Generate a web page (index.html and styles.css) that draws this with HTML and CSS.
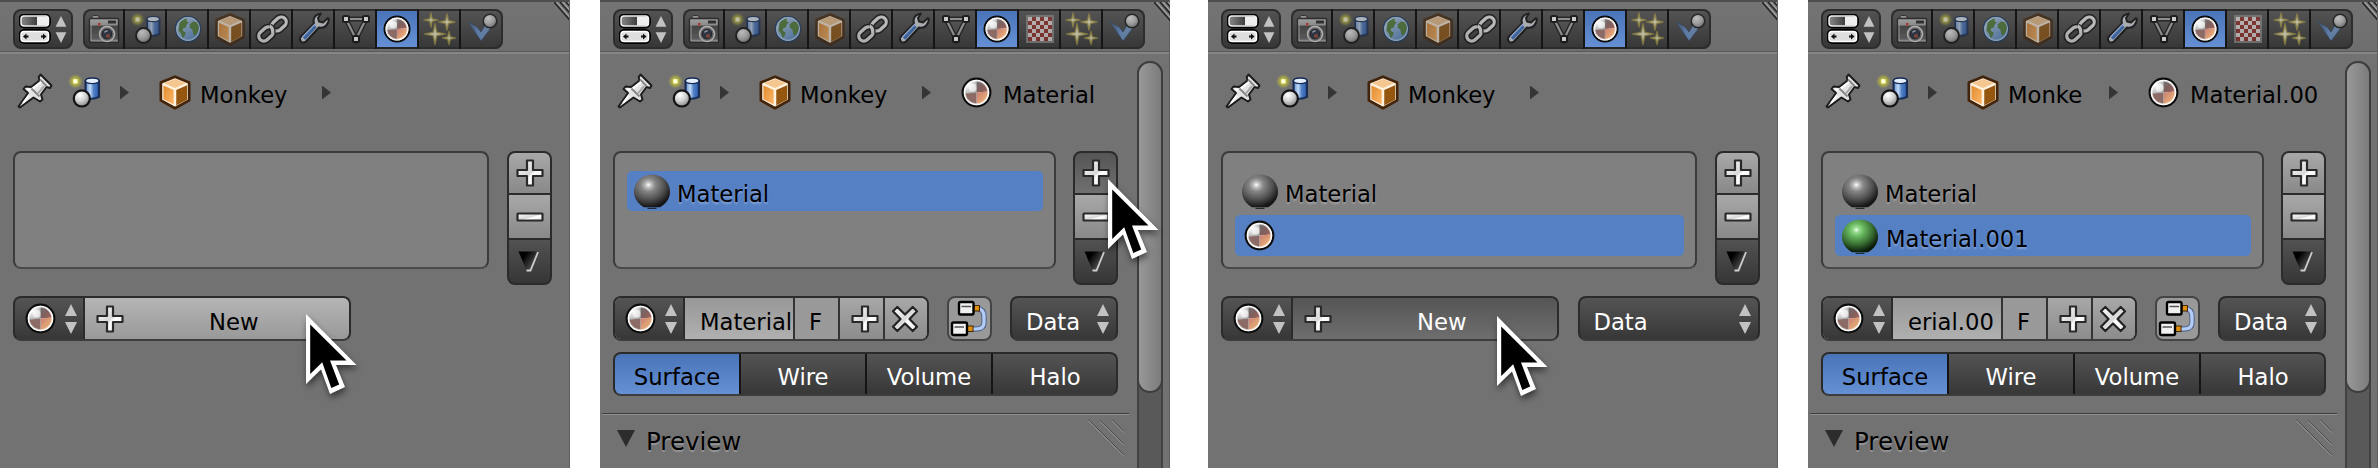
FILE: index.html
```html
<!DOCTYPE html>
<html lang="en">
<head>
<meta charset="utf-8">
<title>Material slots</title>
<link rel="stylesheet" href="styles.css">
</head>
<body>
<svg class="defs" width="0" height="0" aria-hidden="true">
  <defs>
    <radialGradient id="g-ball" cx=".38" cy=".3" r=".75"><stop offset="0" stop-color="#fff"/><stop offset=".5" stop-color="#d0d0d0"/><stop offset="1" stop-color="#808080"/></radialGradient>
    <linearGradient id="g-cyl" x1="0" x2="1"><stop offset="0" stop-color="#5a8ad0"/><stop offset=".35" stop-color="#c4dbf8"/><stop offset=".6" stop-color="#5080c8"/><stop offset="1" stop-color="#2c5aa8"/></linearGradient>
    <radialGradient id="g-sun"><stop offset="0" stop-color="#e0de50"/><stop offset=".5" stop-color="#b8b838" stop-opacity=".8"/><stop offset="1" stop-color="#a8a848" stop-opacity="0"/></radialGradient>
    <radialGradient id="g-gray" cx=".4" cy=".32" r=".68"><stop offset="0" stop-color="#fff"/><stop offset=".12" stop-color="#c0c0c0"/><stop offset=".3" stop-color="#858585"/><stop offset=".65" stop-color="#525252"/><stop offset="1" stop-color="#151515"/></radialGradient>
    <radialGradient id="g-green" cx=".4" cy=".32" r=".68"><stop offset="0" stop-color="#f0fff0"/><stop offset=".12" stop-color="#98dc90"/><stop offset=".3" stop-color="#68b860"/><stop offset=".65" stop-color="#3a7034"/><stop offset="1" stop-color="#0a1a08"/></radialGradient>
    <radialGradient id="g-mat-a" cx=".3" cy=".3" r=".8"><stop offset="0" stop-color="#fff"/><stop offset="1" stop-color="#b0b0b0"/></radialGradient>
    <linearGradient id="g-mat-b" x1="0" y1="0" x2="1" y2="1"><stop offset="0" stop-color="#707070"/><stop offset=".5" stop-color="#80605e"/><stop offset="1" stop-color="#a86058"/></linearGradient>
    <linearGradient id="g-mat-c" x1="0" y1="0" x2="1" y2="1"><stop offset="0" stop-color="#c87c72"/><stop offset="1" stop-color="#f4c078"/></linearGradient>
    <linearGradient id="g-white" x1="0" y1="0" x2="1" y2="1"><stop offset="0" stop-color="#fff"/><stop offset=".5" stop-color="#d8d8d8"/><stop offset=".6" stop-color="#fff"/><stop offset="1" stop-color="#e4e4e4"/></linearGradient>
    <linearGradient id="g-cam" x1="0" x2="0" y1="0" y2="1"><stop offset="0" stop-color="#d0d0d0"/><stop offset=".28" stop-color="#b0b0b0"/><stop offset=".32" stop-color="#454545"/><stop offset=".85" stop-color="#686868"/><stop offset="1" stop-color="#bbb"/></linearGradient>
    <linearGradient id="g-cube-l" x1="0" x2="1" y1="0" y2="1"><stop offset="0" stop-color="#e08a30"/><stop offset="1" stop-color="#ffb868"/></linearGradient>
    <linearGradient id="g-pill" x1="0" x2="1"><stop offset="0" stop-color="#888"/><stop offset=".6" stop-color="#3c3c3c"/></linearGradient>
    <linearGradient id="g-tri" x1="0" x2="1" y1="0" y2=".7"><stop offset=".3" stop-color="#000"/><stop offset="1" stop-color="#666"/></linearGradient>
    <linearGradient id="g-globe" x1="0" x2="1" y1="0" y2="1"><stop offset="0" stop-color="#c4e0f8"/><stop offset="1" stop-color="#4a80c8"/></linearGradient>
    <linearGradient id="g-phys" x1="0" x2="1"><stop offset="0" stop-color="#4a80c8" stop-opacity=".35"/><stop offset=".45" stop-color="#6c9cdc"/><stop offset="1" stop-color="#8cb8f0" stop-opacity=".8"/></linearGradient>

    <symbol id="selector" viewBox="0 0 32 30">
      <rect x="1.500" y="1.500" width="28.500" height="11" rx="4" fill="url(#g-pill)" stroke="#000" stroke-width="4"/>
      <rect x="1.500" y="17" width="28.500" height="11" rx="4" fill="#eee" stroke="#000" stroke-width="4"/>
      <rect x="2" y="2" width="27.500" height="10" rx="3" fill="url(#g-pill)" stroke="#eee" stroke-width="1.500"/>
      <path d="M18 2.500h9q2.500 0 2.500 2.500v4q0 2.500-2.500 2.500h-9z" fill="#eee"/>
      <rect x="2" y="17.500" width="27.500" height="10" rx="3" fill="#ddd" stroke="#fff" stroke-width="1.500"/>
      <path d="M4 22.500l3.500-3v2h2v2h-2v2zM27.500 22.500l-3.500-3v2h-2v2h2v2z" fill="#111"/>
    </symbol>
    <symbol id="updown" viewBox="0 0 12 30"><path d="M6 0l6 12H0zM6 30l6-12H0z" fill="#c2c2c2"/></symbol>
    <symbol id="i-camera" viewBox="0 0 42 40">
      <rect x="9" y="6.500" width="7" height="5" rx="1.500" fill="#bbb" stroke="#222"/>
      <rect x="6.500" y="9.500" width="29" height="23.500" rx="1" fill="url(#g-cam)" stroke="#1c1c1c" stroke-width="1.500"/>
      <path d="M8 10.500v21.500h27" fill="none" stroke="#c8c8c8"/>
      <rect x="25" y="11.500" width="8" height="3" fill="#222"/>
      <rect x="15" y="14" width="2.500" height="2.500" fill="#e03020"/>
      <circle cx="24" cy="25" r="7.500" fill="#777" stroke="#eee" stroke-width="1.500"/>
      <circle cx="24" cy="25" r="4.800" fill="#26304a" stroke="#111"/><path d="M21.500 23.500q1-2 3-1.500" stroke="#bcd" stroke-width="1.500" fill="none"/><circle cx="25" cy="27" r="2" fill="#a04838"/>
    </symbol>
    <symbol id="i-scene" viewBox="0 0 42 40">
      <path d="M22 10v15q6 3.500 12.500 0V10z" fill="url(#g-cyl)" stroke="#182c54" stroke-width="2"/>
      <ellipse cx="28.250" cy="10" rx="6.250" ry="2.600" fill="#e6f0fc" stroke="#182c54" stroke-width="1.200"/>
      <circle cx="12.500" cy="10.500" r="7" fill="url(#g-sun)"/><rect x="10.500" y="8.500" width="4" height="4" fill="#ffffd8"/>
      <circle cx="18.500" cy="26.500" r="7.500" fill="url(#g-ball)" stroke="#111" stroke-width="2"/>
    </symbol>
    <symbol id="i-world" viewBox="0 0 42 40">
      <circle cx="21" cy="20" r="12.500" fill="url(#g-globe)" stroke="#1c3a66" stroke-width="1.600"/>
      <circle cx="21" cy="20" r="11.300" fill="none" stroke="#b8d8f4" stroke-width="1.200"/>
      <path d="M12.500 14q3-4 7.500-4.500l-.5 3 2.500.8-2.500 2.700-.5 2.500-2.500.5-1 2.500 3 2-.5 3-2 2.500-2-4.500-2.500-3zM26 12.500l3.500.5 2.500 4.500-1 5.500-3.500 4-1.500-3-.5-3.500-2.500-1.500-.5-3.500z" fill="#4f8038"/>
    </symbol>
    <symbol id="i-cube" viewBox="0 0 42 40">
      <path d="M21 5.500L34.500 11v17L21 35.500 7.500 28V11z" fill="#fff2e0" stroke="#42240a" stroke-width="2.600" stroke-linejoin="round"/>
      <path d="M21 7.500L31.500 11.700 21 16.200 10.500 11.700z" fill="#f6c690"/>
      <path d="M10 13.800l9.700 4.200v14L10 27z" fill="url(#g-cube-l)"/>
      <path d="M32.500 13.500v13.800L22.200 33V18z" fill="#95570f"/>
    </symbol>
    <symbol id="i-link" viewBox="0 0 42 40">
      <g fill="none" stroke-linejoin="round"><g stroke="#181818" stroke-width="6.500"><rect x="-8" y="-5" width="16" height="10" rx="5" transform="translate(15 25) rotate(-42)"/><rect x="-8" y="-5" width="16" height="10" rx="5" transform="translate(28 15) rotate(-42)"/></g>
      <g stroke="#d4d4d4" stroke-width="3.300"><rect x="-8" y="-5" width="16" height="10" rx="5" transform="translate(15 25) rotate(-42)"/></g>
      <rect x="-8" y="-5" width="16" height="10" rx="5" transform="translate(28 15) rotate(-42)" stroke="#222" stroke-width="5"/>
      <rect x="-8" y="-5" width="16" height="10" rx="5" transform="translate(28 15) rotate(-42)" stroke="#ddd" stroke-width="3.200"/>
      <path d="M19 17q3.500 2 3 6" stroke="#222" stroke-width="5"/><path d="M18.500 17q4 2 3 7" stroke="#ddd" stroke-width="3.200"/></g>
    </symbol>
    <symbol id="i-wrench" viewBox="0 0 42 40">
      <path d="M28 4.500q-7 1-7.500 7l.5 3L7.500 28q-1.500 3 1 5 2.500 1.500 4.500-.5L26 18.500q8 1.500 10-8l-1-1.500-5 4.500-4-1-1-3.500z" fill="#c8ccd2" stroke="#141414" stroke-width="2" stroke-linejoin="round"/>
      <path d="M22.500 17L11 29.500" stroke="#3c70bc" stroke-width="3.500"/>
      <path d="M22 15L9.500 28" stroke="#a8c4ec" stroke-width="1.200"/>
    </symbol>
    <symbol id="i-mesh" viewBox="0 0 42 40">
      <path d="M11 10h20L21 30z" fill="#6a6a6a" fill-opacity=".3" stroke="#1c1c1c" stroke-width="5"/><path d="M11 10h20L21 30z" fill="none" stroke="#a4a4a4" stroke-width="2.200"/>
      <g fill="#f4f4f4" stroke="#101010" stroke-width="2"><rect x="8" y="7" width="6" height="6" rx="1.500"/><rect x="28" y="7" width="6" height="6" rx="1.500"/><rect x="18" y="27" width="6" height="6" rx="1.500"/></g>
    </symbol>
    <symbol id="i-material" viewBox="0 0 32 32">
      <circle cx="16" cy="16" r="14.300" fill="#fff" stroke="#0c0c0c" stroke-width="2.200"/>
      <path d="M16 16V4A12 12 0 0 0 4 17z" fill="url(#g-mat-a)"/>
      <path d="M16 16V4A12 12 0 0 1 28 15z" fill="url(#g-mat-b)"/>
      <path d="M16 16L4 17A12 12 0 0 0 16 28z" fill="#8c6a66"/>
      <path d="M16 16L28 15A12 12 0 0 1 16 28z" fill="url(#g-mat-c)"/>
      <path d="M16 4V16L4 17M16 16V28" stroke="#999" stroke-width=".6" fill="none"/>
      <circle cx="16" cy="16" r="12.100" fill="none" stroke="#fff" stroke-opacity=".6" stroke-width="2"/>
      <circle cx="12" cy="11" r="4" fill="#fff" opacity=".6"/>
    </symbol>
    <symbol id="i-texture" viewBox="0 0 42 40">
      <rect x="8" y="7" width="26" height="26" fill="#f0e8e6" stroke="#888" stroke-width="2"/>
      <path d="M13 8h4v4h-4zM21 8h4v4h-4zM29 8h4v4h-4zM9 12h4v4H9zM17 12h4v4h-4zM25 12h4v4h-4zM13 16h4v4h-4zM21 16h4v4h-4zM29 16h4v4h-4zM9 20h4v4H9zM17 20h4v4h-4zM25 20h4v4h-4zM13 24h4v4h-4zM21 24h4v4h-4zM29 24h4v4h-4zM9 28h4v4H9zM17 28h4v4h-4zM25 28h4v4h-4z" fill="#982c24"/>
    </symbol>
    <symbol id="i-particles" viewBox="0 0 42 40">
      <g stroke="#a89838" stroke-width="1.600" stroke-opacity=".75" fill="#fffcd8" stroke-linejoin="round">
        <path d="M12 4l1.200 5.800L19 11l-5.800 1.200L12 18l-1.200-5.800L5 11l5.800-1.200z"/>
        <path d="M28 5l1.500 6.500L36 13l-6.500 1.500L28 21l-1.500-6.500L20 13l6.500-1.500z"/>
        <path d="M16 14.500l1.800 8.700L26.500 25l-8.700 1.800L16 35.500l-1.800-8.700L5.500 25l8.700-1.800z"/>
        <path d="M30 22.500l1.300 5.200 5.200 1.300-5.200 1.300L30 35.500l-1.300-5.200-5.200-1.300 5.200-1.300z"/>
      </g>
    </symbol>
    <symbol id="i-physics" viewBox="0 0 42 40">
      <path d="M7 13l9 5 4 5 4.500-7.500 5 4L20 32z" fill="url(#g-phys)" stroke="#284878" stroke-opacity=".7"/>
      <circle cx="29" cy="12" r="6.800" fill="url(#g-ball)" stroke="#151515" stroke-width="1.600"/>
    </symbol>
    <symbol id="i-pin" viewBox="0 0 36 36">
      <path d="M23.500 1.500L34.500 12.500l-1.500 2.500-3.500-1-5.500 7.500 1.500 5-2.500 2-6.500-4L3 34.500 1.500 33.500 11 20 6.500 16l2-2.500 5.500.5L22.500 7.500l-.8-3.500z" fill="#e4e4e4" stroke="#1c1c1c" stroke-width="2" stroke-linejoin="round"/>
      <path d="M23 6.500l6.500 6.500M14.500 15.500l8 8" stroke="#888" stroke-width="2"/><path d="M16 15.500l8-6.500M10 16l3 1M12 22.500L6 30" stroke="#fff" stroke-width="2"/><path d="M20.500 21l6.500-8" stroke="#aaa" stroke-width="2"/>
    </symbol>
    <symbol id="i-plus" viewBox="0 0 28 28"><path d="M11 1.500h6V11h9.500v6H17v9.500h-6V17H1.500v-6H11z" fill="url(#g-white)" stroke="#2a2a2a" stroke-width="2.200" stroke-linejoin="round"/></symbol>
    <symbol id="i-minus" viewBox="0 0 28 10"><rect x="1.500" y="1.500" width="25" height="7" rx=".5" fill="url(#g-white)" stroke="#2a2a2a" stroke-width="2.200"/></symbol>
    <symbol id="i-more" viewBox="0 0 22 22"><path d="M.5.500h20L12.500 20.500H9z" fill="url(#g-tri)"/><path d="M20 1L12.500 19.500H8.500" fill="none" stroke="#ccc" stroke-width="1.800"/></symbol>
    <symbol id="i-x" viewBox="0 0 28 28"><path d="M6.300 2L14 9.500 21.700 2 26 6.300 18.500 14 26 21.700 21.700 26 14 18.500 6.300 26 2 21.700 9.500 14 2 6.300z" fill="url(#g-white)" stroke="#222" stroke-width="2.200" stroke-linejoin="round"/></symbol>
    <symbol id="i-nodes" viewBox="0 0 38 38">
      <path d="M27 8.500q7 .5 7 8v6q0 6.500-8 6.500h-4" fill="none" stroke="#5c6c8c" stroke-width="5.500"/><path d="M27 8.500q7 .5 7 8v6q0 6.500-8 6.500h-4" fill="none" stroke="#b4ccf8" stroke-width="3.200"/>
      <rect x="24" y="5.500" width="5.500" height="5.500" fill="#e09010" stroke="#442800"/><rect x="17.500" y="26" width="5.500" height="5.500" fill="#e09010" stroke="#442800"/>
      <rect x="9" y="2" width="14.500" height="12.500" rx="1.500" fill="#f0f0f0" stroke="#000" stroke-width="2.400"/><rect x="2" y="22.500" width="15" height="12.500" rx="1.500" fill="#f0f0f0" stroke="#000" stroke-width="2.400"/>
      <path d="M11.500 6.500h9.500M4.500 27h9.500" stroke="#555" stroke-width="1.600"/>
    </symbol>
    <symbol id="ball-gray" viewBox="0 0 36 36"><path d="M10 34.200A18 17.300 0 1 1 26 34.200z" fill="url(#g-gray)"/><path d="M13.500 35.300h9" stroke="#151515" stroke-width="1"/></symbol>
    <symbol id="ball-green" viewBox="0 0 36 36"><path d="M10 34.200A18 17.300 0 1 1 26 34.200z" fill="url(#g-green)"/><path d="M13.500 35.300h9" stroke="#0a1a08" stroke-width="1"/></symbol>
    <symbol id="corner" viewBox="0 0 16 22"><g stroke="#262626" stroke-width="1.500"><path d="M0 0l20 23M6 0l16 18M12 0l10 11"/></g><g stroke="#a8a8a8" stroke-width="1.100"><path d="M2.500 0l20 23M8.500 0l16 18M14 0l10 11"/></g></symbol>
    <symbol id="grip" viewBox="0 0 36 38"><g stroke="#4c4c4c" stroke-width="1"><path d="M.5.500l35 35M12.500 1.500l23 23M24 .500l12 12"/></g><g stroke="#989898" stroke-width="1"><path d="M.5 1.800l35 35M12.500 2.800l23 23M24 1.800l12 12"/></g></symbol>
    <symbol id="cursor" viewBox="0 0 51 81"><path d="M0 0V70L15 55.500 24 80 39 73 30 51H50.500z" fill="#fff"/><path d="M4.200 10.500V60L16.200 48.300 25.300 74 33.200 70.500 24 46.500H40.500z"/></symbol>
  </defs>
</svg>

<main class="board">
  <section class="panel">
    <header class="header">
      <div class="selector"><svg class="pills"><use href="#selector"/></svg><svg class="updown short"><use href="#updown"/></svg></div>
      <nav class="tabs">
        <span class="tab"><svg class="glyph"><use href="#i-camera"/></svg></span><span class="tab"><svg class="glyph"><use href="#i-scene"/></svg></span><span class="tab"><svg class="glyph"><use href="#i-world"/></svg></span><span class="tab"><svg class="glyph"><use href="#i-cube"/></svg></span><span class="tab"><svg class="glyph bright"><use href="#i-link"/></svg></span><span class="tab"><svg class="glyph bright"><use href="#i-wrench"/></svg></span><span class="tab"><svg class="glyph bright"><use href="#i-mesh"/></svg></span><span class="tab active"><svg class="tab-mat"><use href="#i-material"/></svg></span><span class="tab"><svg class="glyph"><use href="#i-particles"/></svg></span><span class="tab"><svg class="glyph"><use href="#i-physics"/></svg></span>
      </nav>
      <svg class="corner"><use href="#corner"/></svg>
    </header>
    <div class="crumbs"><svg class="pin"><use href="#i-pin"/></svg><svg class="scene"><use href="#i-scene"/></svg><i class="arrow first"></i><svg class="cube"><use href="#i-cube"/></svg><span class="crumb name">Monkey</span><i class="arrow"></i></div>
    <div class="slots">
      <div class="list"></div>
      <div class="tools"><span class="tool light"><svg class="plus"><use href="#i-plus"/></svg></span><span class="tool light"><svg class="minus"><use href="#i-minus"/></svg></span><span class="tool"><svg class="more"><use href="#i-more"/></svg></span></div>
    </div>
    <div class="row">
      <div class="group new-a"><span class="browse"><svg class="mat"><use href="#i-material"/></svg><svg class="updown"><use href="#updown"/></svg></span><span class="new light-hover"><svg class="plus"><use href="#i-plus"/></svg><b class="label">New</b></span></div>
    </div>
    <svg class="cursor c1"><use href="#cursor"/></svg>
  </section>

  <section class="panel scrolled second">
    <header class="header">
      <div class="selector"><svg class="pills"><use href="#selector"/></svg><svg class="updown short"><use href="#updown"/></svg></div>
      <nav class="tabs">
        <span class="tab"><svg class="glyph"><use href="#i-camera"/></svg></span><span class="tab"><svg class="glyph"><use href="#i-scene"/></svg></span><span class="tab"><svg class="glyph"><use href="#i-world"/></svg></span><span class="tab"><svg class="glyph"><use href="#i-cube"/></svg></span><span class="tab"><svg class="glyph bright"><use href="#i-link"/></svg></span><span class="tab"><svg class="glyph bright"><use href="#i-wrench"/></svg></span><span class="tab"><svg class="glyph bright"><use href="#i-mesh"/></svg></span><span class="tab active"><svg class="tab-mat"><use href="#i-material"/></svg></span><span class="tab"><svg class="glyph"><use href="#i-texture"/></svg></span><span class="tab"><svg class="glyph"><use href="#i-particles"/></svg></span><span class="tab"><svg class="glyph"><use href="#i-physics"/></svg></span>
      </nav>
      <svg class="corner"><use href="#corner"/></svg>
    </header>
    <div class="split">
      <div class="content">
        <div class="crumbs"><svg class="pin"><use href="#i-pin"/></svg><svg class="scene"><use href="#i-scene"/></svg><i class="arrow first"></i><svg class="cube"><use href="#i-cube"/></svg><span class="crumb name">Monkey</span><i class="arrow"></i><svg class="mat crumb-mat"><use href="#i-material"/></svg><span class="crumb">Material</span></div>
        <div class="slots">
          <div class="list"><div class="slot selected"><svg class="ball"><use href="#ball-gray"/></svg><span class="slot-name">Material</span></div></div>
          <div class="tools"><span class="tool pressed"><svg class="plus"><use href="#i-plus"/></svg></span><span class="tool light"><svg class="minus"><use href="#i-minus"/></svg></span><span class="tool"><svg class="more"><use href="#i-more"/></svg></span></div>
        </div>
        <div class="row">
          <div class="group datablock"><span class="browse"><svg class="mat"><use href="#i-material"/></svg><svg class="updown"><use href="#updown"/></svg></span><span class="field"><b class="label">Material</b></span><span class="btn fake"><b class="label">F</b></span><span class="btn add"><svg class="plus"><use href="#i-plus"/></svg></span><span class="btn close"><svg class="plus"><use href="#i-x"/></svg></span></div>
          <div class="group nodes"><svg class="node-icon"><use href="#i-nodes"/></svg></div>
          <div class="group menu"><b class="label">Data</b><svg class="updown"><use href="#updown"/></svg></div>
        </div>
        <div class="group types"><span class="type on"><b class="label">Surface</b></span><span class="type"><b class="label">Wire</b></span><span class="type"><b class="label">Volume</b></span><span class="type"><b class="label">Halo</b></span></div>
        <div class="preview"><i class="open"></i><span class="title">Preview</span><svg class="grip"><use href="#grip"/></svg></div>
      </div>
      <div class="scroll"><div class="thumb"></div></div>
    </div>
    <svg class="cursor c2"><use href="#cursor"/></svg>
  </section>

  <section class="panel third">
    <header class="header">
      <div class="selector"><svg class="pills"><use href="#selector"/></svg><svg class="updown short"><use href="#updown"/></svg></div>
      <nav class="tabs">
        <span class="tab"><svg class="glyph"><use href="#i-camera"/></svg></span><span class="tab"><svg class="glyph"><use href="#i-scene"/></svg></span><span class="tab"><svg class="glyph"><use href="#i-world"/></svg></span><span class="tab"><svg class="glyph"><use href="#i-cube"/></svg></span><span class="tab"><svg class="glyph bright"><use href="#i-link"/></svg></span><span class="tab"><svg class="glyph bright"><use href="#i-wrench"/></svg></span><span class="tab"><svg class="glyph bright"><use href="#i-mesh"/></svg></span><span class="tab active"><svg class="tab-mat"><use href="#i-material"/></svg></span><span class="tab"><svg class="glyph"><use href="#i-particles"/></svg></span><span class="tab"><svg class="glyph"><use href="#i-physics"/></svg></span>
      </nav>
      <svg class="corner"><use href="#corner"/></svg>
    </header>
    <div class="crumbs"><svg class="pin"><use href="#i-pin"/></svg><svg class="scene"><use href="#i-scene"/></svg><i class="arrow first"></i><svg class="cube"><use href="#i-cube"/></svg><span class="crumb name">Monkey</span><i class="arrow"></i></div>
    <div class="slots">
      <div class="list"><div class="slot"><svg class="ball"><use href="#ball-gray"/></svg><span class="slot-name">Material</span></div><div class="slot selected"><svg class="mat slot-mat"><use href="#i-material"/></svg></div></div>
      <div class="tools"><span class="tool light"><svg class="plus"><use href="#i-plus"/></svg></span><span class="tool light"><svg class="minus"><use href="#i-minus"/></svg></span><span class="tool"><svg class="more"><use href="#i-more"/></svg></span></div>
    </div>
    <div class="row">
      <div class="group new-a"><span class="browse"><svg class="mat"><use href="#i-material"/></svg><svg class="updown"><use href="#updown"/></svg></span><span class="new dark-press"><svg class="plus"><use href="#i-plus"/></svg><b class="label">New</b></span></div>
      <div class="group menu wide"><b class="label">Data</b><svg class="updown"><use href="#updown"/></svg></div>
    </div>
    <svg class="cursor c3"><use href="#cursor"/></svg>
  </section>

  <section class="panel scrolled fourth">
    <header class="header">
      <div class="selector"><svg class="pills"><use href="#selector"/></svg><svg class="updown short"><use href="#updown"/></svg></div>
      <nav class="tabs">
        <span class="tab"><svg class="glyph"><use href="#i-camera"/></svg></span><span class="tab"><svg class="glyph"><use href="#i-scene"/></svg></span><span class="tab"><svg class="glyph"><use href="#i-world"/></svg></span><span class="tab"><svg class="glyph"><use href="#i-cube"/></svg></span><span class="tab"><svg class="glyph bright"><use href="#i-link"/></svg></span><span class="tab"><svg class="glyph bright"><use href="#i-wrench"/></svg></span><span class="tab"><svg class="glyph bright"><use href="#i-mesh"/></svg></span><span class="tab active"><svg class="tab-mat"><use href="#i-material"/></svg></span><span class="tab"><svg class="glyph"><use href="#i-texture"/></svg></span><span class="tab"><svg class="glyph"><use href="#i-particles"/></svg></span><span class="tab"><svg class="glyph"><use href="#i-physics"/></svg></span>
      </nav>
      <svg class="corner"><use href="#corner"/></svg>
    </header>
    <div class="split">
      <div class="content">
        <div class="crumbs"><svg class="pin"><use href="#i-pin"/></svg><svg class="scene"><use href="#i-scene"/></svg><i class="arrow first"></i><svg class="cube"><use href="#i-cube"/></svg><span class="crumb name clipped">Monke</span><i class="arrow"></i><svg class="mat crumb-mat"><use href="#i-material"/></svg><span class="crumb">Material.00</span></div>
        <div class="slots">
          <div class="list"><div class="slot"><svg class="ball"><use href="#ball-gray"/></svg><span class="slot-name">Material</span></div><div class="slot selected"><svg class="ball"><use href="#ball-green"/></svg><span class="slot-name low">Material.001</span></div></div>
          <div class="tools"><span class="tool light"><svg class="plus"><use href="#i-plus"/></svg></span><span class="tool light"><svg class="minus"><use href="#i-minus"/></svg></span><span class="tool"><svg class="more"><use href="#i-more"/></svg></span></div>
        </div>
        <div class="row">
          <div class="group datablock"><span class="browse"><svg class="mat"><use href="#i-material"/></svg><svg class="updown"><use href="#updown"/></svg></span><span class="field"><b class="label">erial.00</b></span><span class="btn fake"><b class="label">F</b></span><span class="btn add"><svg class="plus"><use href="#i-plus"/></svg></span><span class="btn close"><svg class="plus"><use href="#i-x"/></svg></span></div>
          <div class="group nodes"><svg class="node-icon"><use href="#i-nodes"/></svg></div>
          <div class="group menu"><b class="label">Data</b><svg class="updown"><use href="#updown"/></svg></div>
        </div>
        <div class="group types"><span class="type on"><b class="label">Surface</b></span><span class="type"><b class="label">Wire</b></span><span class="type"><b class="label">Volume</b></span><span class="type"><b class="label">Halo</b></span></div>
        <div class="preview"><i class="open"></i><span class="title">Preview</span><svg class="grip"><use href="#grip"/></svg></div>
      </div>
      <div class="scroll"><div class="thumb"></div></div>
    </div>
  </section>
</main>
</body>
</html>
```

FILE: styles.css
```css
* { box-sizing: border-box; }
body { margin: 0; background: #fff; font: 22.7px/28px "DejaVu Sans", sans-serif; color: #000; overflow: hidden; }
svg { display: block; flex: none; }
.defs { position: absolute; }
b { font-weight: normal; }

.board { display: flex; width: 2378px; height: 468px; }
.panel { position: relative; width: 570px; height: 468px; flex: none; background: #727272; border-right: 1px solid #606060; overflow: hidden; display: flex; flex-direction: column; }
.second, .fourth { margin-left: 30px; }
.third { margin-left: 38px; }
.second { overflow: visible; }

/* header */
.header { display: flex; height: 54px; flex: none; padding: 7px 0 0 13px; border-top: 2px solid #4d4d4d; border-bottom: 2px solid #868686; background: linear-gradient(#747474, #6e6e6e); box-shadow: inset 0 -1px #595959; }
.selector { width: 60px; height: 40px; display: flex; align-items: center; padding-left: 4px; gap: 4px; border: 2px solid #2d2d2d; border-radius: 8px; background: linear-gradient(#525252, #373737); }
.pills { width: 32px; height: 30px; }
.updown { width: 12px; height: 30px; }
.short { height: 27px; }
.tabs { margin-left: 10px; display: flex; height: 40px; border-radius: 8px; overflow: hidden; background: linear-gradient(#555, #363636); box-shadow: inset 0 0 0 2px #2d2d2d; }
.tab { width: 42px; height: 40px; border-right: 2px solid #151515; flex: none; }
.tab:last-child { border-right: 0; }
.glyph { width: 42px; height: 40px; opacity: .64; }
.glyph.bright { opacity: .76; }
.tab.active { display: flex; align-items: center; justify-content: center; background: linear-gradient(#4a74b8, #6690d4); border-top: 2px solid #242424; border-bottom: 2px solid #242424; }
.tab-mat { width: 28px; height: 28px; }
.corner { width: 16px; height: 22px; margin: -7px -1px 0 auto; }

/* breadcrumbs */
.crumbs { display: flex; align-items: center; height: 74px; padding-left: 17px; flex: none; }
.pin { width: 36px; height: 36px; }
.scene { width: 45px; height: 43px; margin: 0 0 0 9px; }
.arrow { width: 9px; height: 14px; background: #353535; clip-path: polygon(0 0, 100% 50%, 0 100%); margin: 3px 0 0 1px; flex: none; }
.arrow.first { margin-left: 13px; }
.cube { width: 44px; height: 42px; margin: 2px 0 0 24px; }
.crumb { padding-top: 8px; white-space: nowrap; }
.crumb.name { width: 124px; padding-left: 3px; }
.crumb.clipped { width: 103px; }
.mat { width: 31px; height: 31px; }
.crumb-mat { margin: 2px 11px 0 30px; }

/* material slots */
.slots { display: flex; padding-left: 13px; margin-top: 23px; gap: 18px; height: 134px; flex: none; }
.list { width: 476px; height: 118px; border: 2px solid #3b3b3b; border-bottom-color: #4a4a4a; border-radius: 8px; background: #808080; padding: 18px 11.500px 0 12px; }
.scrolled .slots { gap: 17px; }
.scrolled .list { width: 443px; }
.slot { height: 40px; border-radius: 5px; display: flex; align-items: center; padding-left: 7px; margin-bottom: 4px; }
.slot + .slot { height: 41px; }
.selected { background: #5680c4; }
.ball { width: 36px; height: 36px; }
.slot-name { margin-left: 7px; padding-top: 6px; text-shadow: 0 2px 2px rgba(255,255,255,.28); }
.slot-name.low { margin-left: 8px; }
.slot-mat { margin-left: 2px; }
.tools { width: 45px; height: 134px; border: 2px solid #2b2b2b; border-radius: 8px; overflow: hidden; display: flex; flex-direction: column; background: #2b2b2b; gap: 2px; }
.tool { flex: 0 0 43px; display: flex; align-items: center; justify-content: center; background: linear-gradient(#525252, #363636); }
.tool:first-child { flex-basis: 40px; }
.tool.light { background: linear-gradient(#a8a8a8, #898989); }
.tool.pressed { background: linear-gradient(#555, #707070); }
.plus { width: 28px; height: 28px; }
.minus { width: 28px; height: 10px; }
.more { width: 22px; height: 22px; margin-right: 2px; }

/* data-block row */
.row { display: flex; margin-top: 11px; padding-left: 13px; height: 45px; flex: none; }
.group { display: flex; border: 2px solid #2b2b2b; border-bottom-color: #3c3c3c; border-radius: 8px; overflow: hidden; background: linear-gradient(#545454, #373737); }
.label { padding-top: 7px; }
.new-a { width: 338px; }
.browse { width: 70px; flex: none; border-right: 2px solid #2b2b2b; display: flex; align-items: center; padding-left: 10px; gap: 9px; }
.new { flex: 1; display: flex; align-items: center; padding-left: 11px; gap: 85px; }
.light-hover { background: linear-gradient(#b5b5b5, #999); }
.dark-press { background: linear-gradient(#555, #6e6e6e); color: #fff; }
.datablock { width: 315.500px; background: #999; }
.datablock .browse { background: linear-gradient(#545454, #373737); }
.field { width: 110px; flex: none; border-right: 2px solid #333; padding-left: 15px; display: flex; align-items: center; overflow: hidden; background: linear-gradient(#979797, #b0b0b0); }
.btn { width: 45px; flex: none; border-right: 2px solid #333; display: flex; align-items: center; justify-content: center; }
.fake { padding-right: 2px; }
.add, .close { background: linear-gradient(#a8a8a8, #8c8c8c); }
.add { padding-left: 6px; }
.close { flex: 1; border: 0; padding-right: 1px; }
.nodes { margin-left: 18px; width: 45px; align-items: center; justify-content: center; background: #999; border-color: #444; }
.node-icon { width: 38px; height: 38px; }
.menu { margin-left: 18.500px; width: 107.500px; align-items: center; justify-content: space-between; padding: 0 7px 0 14px; color: #fff; }
.menu.wide { width: 182px; }

/* material types */
.types { margin: 11px 0 0 13px; width: 504.500px; height: 44px; flex: none; }
.type { width: 126px; flex: none; display: flex; align-items: center; justify-content: center; color: #fff; }
.type:first-child { width: 124px; }
.type .label { padding-top: 6px; }
.type + .type { border-left: 2px solid #151515; }
.on { color: #000; background: linear-gradient(#4a74b8, #6690d4); }

/* preview panel header */
.preview { margin: 17px 0 0 2px; width: 527px; height: 55px; border-top: 1.500px solid #3d3d3d; box-shadow: inset 0 1px #929292; display: flex; align-items: flex-start; padding-left: 15px; }
.open { width: 18px; height: 17px; margin-top: 16px; background: #2c2c2c; clip-path: polygon(0 0, 100% 0, 50% 100%); }
.title { margin: 14px 0 0 11px; font-size: 24.500px; text-shadow: 0 2px 1px rgba(255,255,255,.25); }
.grip { width: 36px; height: 38px; margin: 5px 5px 0 auto; }

/* scroll bar */
.split { display: flex; flex: 1; min-height: 0; }
.content { width: 537px; flex: none; }
.scroll { width: 26px; height: 407px; margin-top: 7px; border: solid #424242; border-width: 0 2px; background: #595959; border-radius: 13px 13px 0 0; }
.thumb { width: 26px; height: 332px; margin-left: -2px; border: 2px solid #3e3e3e; border-radius: 13px; background: linear-gradient(90deg, #989898, #7c7c7c); }

/* pointer */
.cursor { position: absolute; width: 51px; height: 81px; overflow: visible; filter: drop-shadow(1px 4px 3px rgba(0,0,0,.5)); }
.c1 { left: 305.500px; top: 314px; }
.c2 { left: 508px; top: 178.500px; }
.c3 { left: 289px; top: 316px; }
```
